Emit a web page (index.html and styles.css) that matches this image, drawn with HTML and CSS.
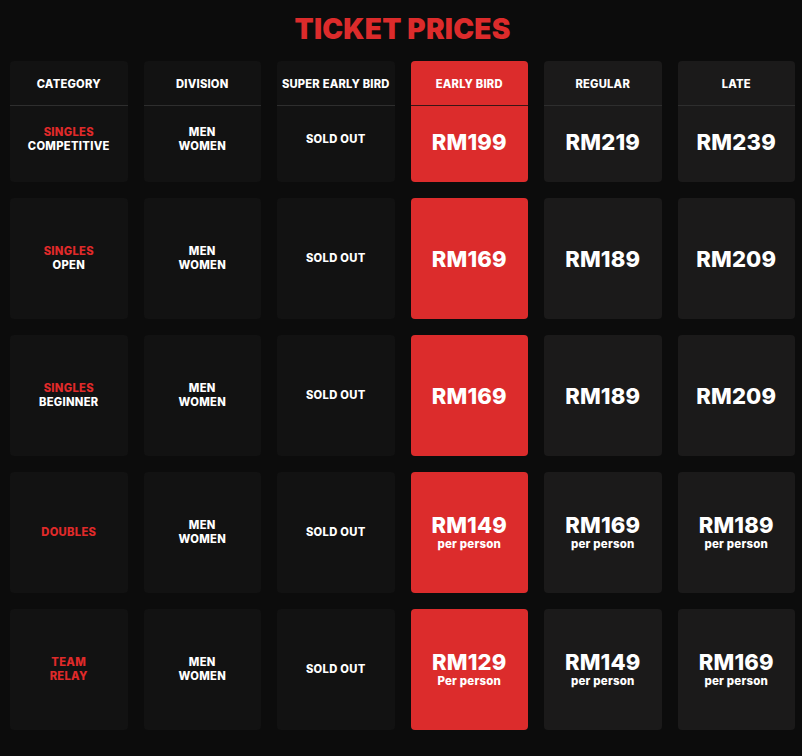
FILE: index.html
```html
<!DOCTYPE html>
<html lang="en">
<head>
<meta charset="utf-8">
<title>Ticket Prices</title>
<link rel="stylesheet" href="styles.css">
</head>
<body>
<main class="page">
  <h1 class="title">TICKET PRICES</h1>
  <div class="grid">
    <!-- row 1 -->
    <div class="cell info"><div class="head">CATEGORY</div><div class="body"><span class="red">SINGLES</span><span>COMPETITIVE</span></div></div>
    <div class="cell info"><div class="head">DIVISION</div><div class="body"><span>MEN</span><span>WOMEN</span></div></div>
    <div class="cell info"><div class="head">SUPER EARLY BIRD</div><div class="body"><span>SOLD OUT</span></div></div>
    <div class="cell hot"><div class="head">EARLY BIRD</div><div class="body"><span class="price">RM199</span></div></div>
    <div class="cell price-cell"><div class="head">REGULAR</div><div class="body"><span class="price">RM219</span></div></div>
    <div class="cell price-cell"><div class="head">LATE</div><div class="body"><span class="price">RM239</span></div></div>

    <!-- row 2 -->
    <div class="cell info"><div class="body"><span class="red">SINGLES</span><span>OPEN</span></div></div>
    <div class="cell info"><div class="body"><span>MEN</span><span>WOMEN</span></div></div>
    <div class="cell info"><div class="body"><span>SOLD OUT</span></div></div>
    <div class="cell hot"><div class="body"><span class="price">RM169</span></div></div>
    <div class="cell price-cell"><div class="body"><span class="price">RM189</span></div></div>
    <div class="cell price-cell"><div class="body"><span class="price">RM209</span></div></div>

    <!-- row 3 -->
    <div class="cell info"><div class="body"><span class="red">SINGLES</span><span>BEGINNER</span></div></div>
    <div class="cell info"><div class="body"><span>MEN</span><span>WOMEN</span></div></div>
    <div class="cell info"><div class="body"><span>SOLD OUT</span></div></div>
    <div class="cell hot"><div class="body"><span class="price">RM169</span></div></div>
    <div class="cell price-cell"><div class="body"><span class="price">RM189</span></div></div>
    <div class="cell price-cell"><div class="body"><span class="price">RM209</span></div></div>

    <!-- row 4 -->
    <div class="cell info"><div class="body"><span class="red">DOUBLES</span></div></div>
    <div class="cell info"><div class="body"><span>MEN</span><span>WOMEN</span></div></div>
    <div class="cell info"><div class="body"><span>SOLD OUT</span></div></div>
    <div class="cell hot"><div class="body"><span class="price">RM149</span><span class="per">per person</span></div></div>
    <div class="cell price-cell"><div class="body"><span class="price">RM169</span><span class="per">per person</span></div></div>
    <div class="cell price-cell"><div class="body"><span class="price">RM189</span><span class="per">per person</span></div></div>

    <!-- row 5 -->
    <div class="cell info"><div class="body"><span class="red">TEAM</span><span class="red">RELAY</span></div></div>
    <div class="cell info"><div class="body"><span>MEN</span><span>WOMEN</span></div></div>
    <div class="cell info"><div class="body"><span>SOLD OUT</span></div></div>
    <div class="cell hot"><div class="body"><span class="price">RM129</span><span class="per">Per person</span></div></div>
    <div class="cell price-cell"><div class="body"><span class="price">RM149</span><span class="per">per person</span></div></div>
    <div class="cell price-cell"><div class="body"><span class="price">RM169</span><span class="per">per person</span></div></div>
  </div>
</main>
</body>
</html>
```

FILE: styles.css
```css
* { box-sizing: border-box; }

html, body {
  margin: 0;
  padding: 0;
  background: #0c0c0c;
}

body {
  font-family: Inter, "Noto Sans", "Liberation Sans", sans-serif;
  color: #ffffff;
  height: 756px;
  overflow: hidden;
}

.page {
  width: 785px;
  margin-left: 10px;
  padding-top: 13px;
}

.title {
  margin: 0 0 15px;
  text-align: center;
  font-size: 28px;
  line-height: 33px;
  font-weight: 900;
  color: #dc2b2b;
  letter-spacing: 0.2px;
}

.grid {
  display: grid;
  grid-template-columns: repeat(6, 1fr);
  grid-auto-rows: 121px;
  gap: 16px;
}

.cell {
  display: flex;
  flex-direction: column;
  border-radius: 4px;
  overflow: hidden;
}

.info { background: #121212; }
.price-cell { background: #1b1a1a; }
.hot { background: #dc2c2c; }

.head {
  height: 45px;
  flex: none;
  display: flex;
  align-items: center;
  justify-content: center;
  font-size: 11.2px;
  font-weight: 800;
  letter-spacing: 0.2px;
  border-bottom: 1px solid #2e2e2e;
  padding-top: 1px;
  white-space: nowrap;
}

.hot .head { border-bottom-color: #3a1616; }

.body {
  flex: 1;
  display: flex;
  flex-direction: column;
  align-items: center;
  justify-content: center;
  text-align: center;
  font-size: 11.2px;
  line-height: 13.6px;
  font-weight: 800;
  letter-spacing: 0.3px;
}

.info .head + .body { padding-bottom: 8px; }
.hot .head + .body,
.price-cell .head + .body { padding-bottom: 5px; }

.red { color: #e02a2a; }

.price {
  font-size: 22px;
  line-height: 22px;
  font-weight: 800;
  letter-spacing: 0.2px;
}

.per {
  font-size: 11.5px;
  line-height: 14px;
  font-weight: 800;
  letter-spacing: 0.2px;
  margin-top: 1px;
}
```
